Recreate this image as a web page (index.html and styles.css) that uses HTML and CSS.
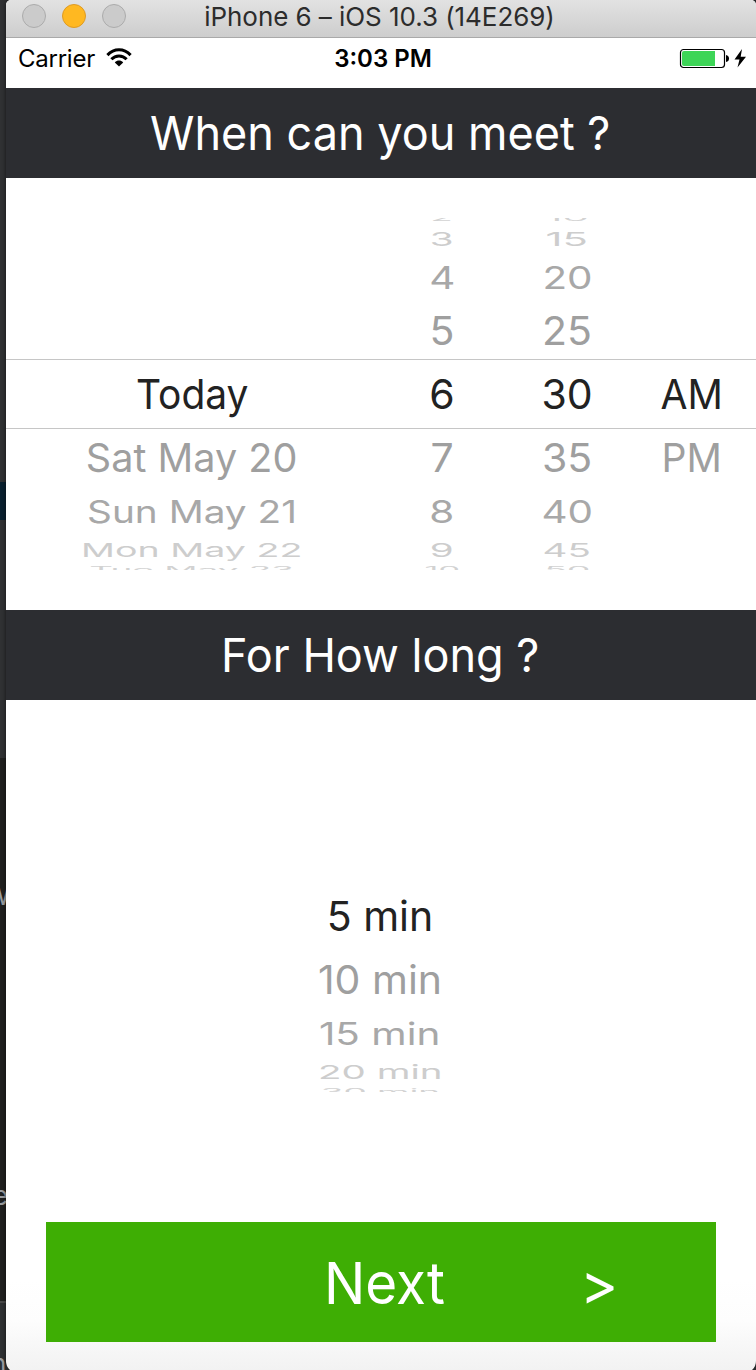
FILE: index.html
```
<!DOCTYPE html>
<html lang="en">
<head>
<meta charset="utf-8">
<title>iPhone 6 – iOS 10.3 (14E269)</title>
<link rel="stylesheet" href="styles.css">
</head>
<body>
<div class="desktop">
  <div class="backdrop">
    <div class="strip strip-top"></div>
    <div class="strip strip-blue"></div>
    <div class="strip strip-gray"></div>
    <div class="strip strip-dark"><span class="peek peek-w">w</span><span class="peek peek-e">e</span></div>
    <div class="strip strip-foot"><span class="peek peek-n">n</span></div>
  </div>
  <main class="window">
    <header class="titlebar">
      <div class="lights"><i class="light"></i><i class="light amber"></i><i class="light"></i></div>
      <span class="title">iPhone 6 – iOS 10.3 (14E269)</span>
    </header>
    <div class="status">
      <div class="carrier"><span class="carrier-name">Carrier</span>
        <svg class="wifi" width="26" height="19" viewBox="0 0 26 19"><g fill="none" stroke="#000" stroke-width="3"><path d="M1.4 7.1C8 .1 18 .1 24.6 7.1"/><path d="M5.4 11.3C9.6 6.8 16.4 6.8 20.6 11.3"/></g><path d="M8.8 14.4C11.2 12 14.8 12 17.2 14.4L13 18.5Z"/></svg>
      </div>
      <span class="clock">3:03 PM</span>
      <svg class="battery" width="68" height="22" viewBox="0 0 68 22"><rect x="1.5" y="2.5" width="44" height="18" rx="3" fill="#fff" stroke="#000" stroke-width="1.2"/><path d="M5 4H36V19H5Q3 19 3 17V6Q3 4 5 4Z" fill="#3dd557"/><path d="M47 8Q50 8.5 50 11.5Q50 14.500 47 15Z"/><path d="M63 2L55.500 12.500H60.500L58.500 20.500L67 9.700H61.700Z"/></svg>
    </div>
    <h1 class="band"><span class="band-text">When can you meet ?</span></h1>
    <section class="picker">
      <div class="wheel dates">
        <div class="row u4"></div><div class="row u3"></div><div class="row u2"></div><div class="row u1"></div>
        <div class="row sel"><span>Today</span></div>
        <div class="row d1"><span>Sat May 20</span></div>
        <div class="row d2"><span>Sun May 21</span></div>
        <div class="row d3"><span>Mon May 22</span></div>
        <div class="row d4"><span>Tue May 23</span></div>
      </div>
      <div class="wheel">
        <div class="row u4"><span>2</span></div><div class="row u3"><span>3</span></div><div class="row u2"><span>4</span></div><div class="row u1"><span>5</span></div>
        <div class="row sel"><span>6</span></div>
        <div class="row d1"><span>7</span></div><div class="row d2"><span>8</span></div><div class="row d3"><span>9</span></div><div class="row d4"><span class="ten">10</span></div>
      </div>
      <div class="wheel">
        <div class="row u4"><span class="minute-top">10</span></div><div class="row u3"><span class="fifteen">15</span></div><div class="row u2"><span>20</span></div><div class="row u1"><span>25</span></div>
        <div class="row sel"><span>30</span></div>
        <div class="row d1"><span>35</span></div><div class="row d2"><span>40</span></div><div class="row d3"><span>45</span></div><div class="row d4"><span>50</span></div>
      </div>
      <div class="wheel period">
        <div class="row u4"></div><div class="row u3"></div><div class="row u2"></div><div class="row u1"></div>
        <div class="row sel"><span>AM</span></div>
        <div class="row d1"><span>PM</span></div>
      </div>
    </section>
    <h1 class="band"><span class="band-text">For How long ?</span></h1>
    <section class="duration">
      <div class="wheel">
        <div class="row plain"><span>5 min</span></div>
        <div class="row d1"><span>10 min</span></div>
        <div class="row d2"><span>15 min</span></div>
        <div class="row d3"><span>20 min</span></div>
        <div class="row d4"><span>30 min</span></div>
      </div>
    </section>
    <button class="next"><span class="next-label">Next</span><span class="chevron">&gt;</span></button>
  </main>
</div>
</body>
</html>
```
FILE: styles.css
```
* { box-sizing: border-box; }
body { margin: 0; font-family: Inter, "Liberation Sans", sans-serif; }
.desktop { position: relative; width: 756px; height: 1370px; overflow: hidden; background: #292a2c; }
.backdrop { position: absolute; inset: 0; display: flex; flex-direction: column; }
.strip { flex: none; position: relative; }
.strip-top { height: 482px; background: #303133; }
.strip-blue { height: 38px; background: #09202f; }
.strip-gray { height: 238px; background: #303133; }
.strip-dark { height: 543px; background: #20201f; }
.strip-foot { height: 69px; background: #2e3032; border-top: 2px solid #484848; }
.peek { position: absolute; color: #9b9da0; font-size: 26px; line-height: 26px; }
.peek-w { left: -14px; top: 123px; font-size: 30px; }
.peek-e { left: -7px; top: 425px; }
.peek-n { left: -9px; top: 48px; }

.window { position: relative; display: flex; flex-direction: column; margin-left: 6px; width: 750px; height: 1373px; border-radius: 5px 5px 12px 12px; overflow: hidden; background: linear-gradient(#fff 1280px, #fdfdfd 1320px, #f2f2f2 1370px); box-shadow: 0 0 4px rgba(0,0,0,.6); }
.titlebar { position: relative; flex: none; height: 38px; display: flex; align-items: center; justify-content: center; background: linear-gradient(#e2e2e2, #cdcdcd); border-bottom: 1px solid #a9a9a9; }
.lights { position: absolute; left: 16px; top: 4px; display: flex; gap: 16px; }
.light { width: 24px; height: 24px; border-radius: 50%; background: #cbcbcb; border: 1px solid #ababab; }
.amber { background: #ffb821; border-color: #dd9a25; }
.title { padding: 0 3px 3px 0; font-size: 26px; line-height: 34px; color: #2c2c2c; letter-spacing: -.06px; white-space: nowrap; }

.status { flex: none; height: 50px; display: grid; grid-template-columns: 1fr auto 1fr; align-items: start; padding: 6px 9px 0 12px; font-size: 24px; line-height: 30px; color: #000; }
.carrier { display: flex; gap: 11px; }
.carrier-name { letter-spacing: -.25px; }
.wifi { margin-top: 4px; }
.clock { font-weight: 600; padding-left: 1px; }
.battery { justify-self: end; margin-top: 3px; }

.band { flex: none; height: 90px; margin: 0; display: flex; align-items: center; justify-content: center; background: #2c2d31; color: #fff; font-size: 47px; font-weight: 400; white-space: nowrap; }
.band-text { transform: translate(-1px, -1px) scaleX(.958); }

.picker { flex: none; height: 432px; padding-top: 40px; display: grid; grid-template-columns: 372px 128px 122px 128px; align-items: start; }
.wheel { display: flex; flex-direction: column; }
.row { display: flex; align-items: center; justify-content: center; font-size: 41px; line-height: 50px; white-space: pre; color: #9f9f9f; }
.row span { flex: none; display: block; transform: scale(var(--sx, 1), var(--sy, 1)); }
.sel { height: 70px; color: #222; border-top: 1px solid #c6c6c6; border-bottom: 1px solid #c6c6c6; }
.plain { height: 70px; color: #222; }
.u1, .d1 { --sy: .95; }
.u2, .d2 { --sy: .76; --sx: .985; color: #a8a8a8; }
.u3, .d3 { --sy: .47; --sx: .94; color: #cdcdcd; }
.u4, .d4 { height: 6px; --sy: .22; --sx: .9; color: #d2d2d2; overflow: hidden; }
.d1 { height: 58px; }
.d2 { height: 49px; }
.d3 { height: 28px; }
.u1 { height: 56px; }
.u2 { height: 50px; }
.u3 { height: 29px; }
.u4 { align-items: flex-end; padding-bottom: 1px; }
.u4 span { transform-origin: 50% 100%; }
.d4 { align-items: flex-start; }
.d4 span { transform-origin: 50% 0; }
.dates .sel { --sx: .95; }
.dates .d1 { --sx: .965; }
.dates .d2 { --sx: .945; }
.dates .d3 { --sx: .917; }
.period .row { --sx: .955; }
.ten { --sx: .83; }
.fifteen, .minute-top { --sx: 1.02; }

.duration { flex: none; height: 522px; padding: 181px 2px 0 0; }
.next { flex: none; width: 670px; height: 120px; margin: 0 0 0 40px; padding: 0 0 0 278px; border: 0; border-radius: 0; background: #3eae04; color: #fff; font: 400 58px/120px Inter, "Liberation Sans", sans-serif; display: grid; grid-template-columns: 256px auto; justify-content: start; justify-items: start; }
.next-label { transform: translateY(1px) scaleX(.945); transform-origin: 0 50%; }
.chevron { transform: translateY(2px); }
```
